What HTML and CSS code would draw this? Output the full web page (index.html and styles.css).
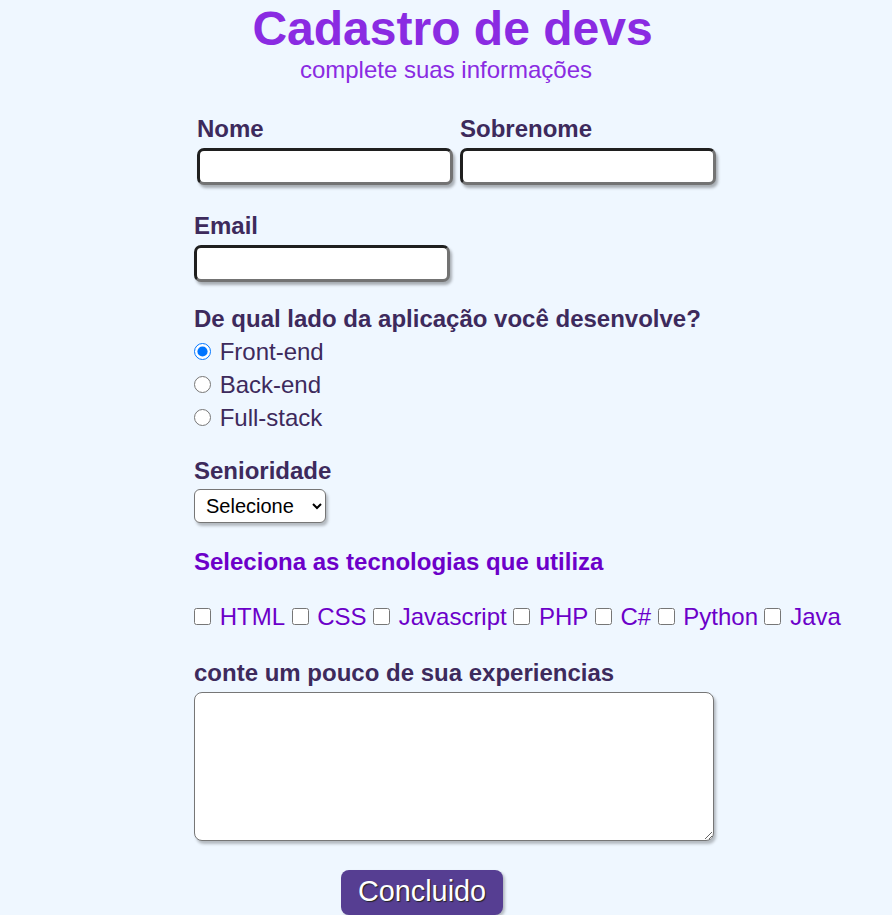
FILE: index.html
```html
<!DOCTYPE html>
<html lang="pt-BR">
  <head>
    <meta charset="UTF-8" />
    <meta name="viewport" content="width=device-width, initial-scale=1.0" />
    <title>Cadastro de devs</title>
    <link rel="stylesheet" href="styles.css">
  </head>
  <body>
    <header class="topo">
      <h1>Cadastro de devs</h1>
      <p class="subtitulo">complete suas informações</p>
    </header>

    <form class="formulario">
      <div class="linha-nome">
        <div class="campo">
          <label for="nome" class="rotulo">Nome</label>
          <input type="text" id="nome" class="entrada">
        </div>
        <div class="campo">
          <label for="sobrenome" class="rotulo">Sobrenome</label>
          <input type="text" id="sobrenome" class="entrada">
        </div>
      </div>

      <div class="campo email">
        <label for="email" class="rotulo">Email</label>
        <input type="email" id="email" class="entrada">
      </div>

      <div class="lado">
        <p class="rotulo">De qual lado da aplicação você desenvolve?</p>
        <div class="opcoes">
          <label class="opcao"><input type="radio" name="lado" checked> Front-end</label>
          <label class="opcao"><input type="radio" name="lado"> Back-end</label>
          <label class="opcao"><input type="radio" name="lado"> Full-stack</label>
        </div>
      </div>

      <div class="senioridade">
        <label for="senioridade" class="rotulo">Senioridade</label>
        <select id="senioridade" class="selecao">
          <option>Selecione</option>
          <option>Júnior</option>
          <option>Pleno</option>
          <option>Sênior</option>
        </select>
      </div>

      <div class="techs">
        <p class="rotulo roxo">Seleciona as tecnologias que utiliza</p>
        <div class="tecnologias"><label><input type="checkbox"> HTML</label><label><input type="checkbox"> CSS</label><label><input type="checkbox"> Javascript</label><label><input type="checkbox"> PHP</label><label><input type="checkbox"> C#</label><label><input type="checkbox"> Python</label><label><input type="checkbox"> Java</label></div>
      </div>

      <div class="experiencia">
        <label for="experiencia" class="rotulo">conte um pouco de sua experiencias</label>
        <textarea id="experiencia" class="texto"></textarea>
      </div>

      <button type="submit" class="btn">Concluido</button>
    </form>
  </body>
</html>
```

FILE: styles.css
```css
body {
  font-family: "Liberation Sans", Arial, sans-serif;
  background-color: #eff7ff;
  color: #3d2a5c;
  margin: 0;
  padding: 0;
  font-size: 24px;
}

.topo {
  text-align: center;
}

h1 {
  color: #8a2be2;
  font-size: 48px;
  margin: 1px 0 0;
  padding-left: 13px;
}

.subtitulo {
  color: #8a2be2;
  margin: 0;
}

.formulario {
  width: 504px;
  margin: 31px auto 0;
}

.linha-nome {
  display: flex;
  gap: 7px;
  margin-left: 3px;
}

.campo {
  display: flex;
  flex-direction: column;
}

.rotulo {
  display: block;
  font-weight: bold;
  margin: 0;
  white-space: nowrap;
}

.roxo {
  color: #6c00c9;
}

.email {
  margin-top: 27px;
}

.lado {
  margin-top: 23px;
}

.opcoes {
  margin-top: 2px;
}

.senioridade {
  margin-top: 23px;
}

.techs {
  margin-top: 25px;
}

.experiencia {
  margin-top: 28px;
}

.entrada {
  width: 256px;
  height: 37px;
  box-sizing: border-box;
  margin-top: 5px;
  border: 3px solid #1f1f1f;
  border-right-color: #737373;
  border-bottom-color: #737373;
  border-radius: 7px;
  background: white;
  box-shadow: 2px 3px 3px rgba(0, 0, 0, 0.3);
}

.opcao {
  display: block;
  line-height: 33px;
}

.opcao input {
  width: 17px;
  height: 17px;
  margin: 0 2px 0 0;
  vertical-align: baseline;
}

.selecao {
  display: block;
  margin-top: 4px;
  width: 132px;
  height: 34px;
  font-family: "Liberation Sans", Arial, sans-serif;
  font-size: 20px;
  color: black;
  background: white;
  border: 1px solid #767676;
  border-radius: 6px;
  padding: 0 4px 0 7px;
  box-shadow: 2px 3px 3px rgba(0, 0, 0, 0.25);
}

.tecnologias {
  margin-top: 27px;
  white-space: nowrap;
  color: #6c00c9;
}

.tecnologias input {
  width: 17px;
  height: 17px;
  margin: 0 2px 2px 6.5px;
  vertical-align: baseline;
}

.tecnologias label:first-child input {
  margin-left: 0;
}

.texto {
  display: block;
  margin-top: 5px;
  width: 520px;
  height: 149px;
  box-sizing: border-box;
  border: 1px solid #767676;
  border-radius: 8px;
  background: white;
  box-shadow: 2px 3px 3px rgba(0, 0, 0, 0.25);
}

.btn {
  display: inline-block;
  margin: 29px 0 0 147px;
  background-color: #563e92;
  color: white;
  font-family: "Liberation Sans", Arial, sans-serif;
  font-size: 28.8px;
  padding: 5px 17px 7px;
  border: none;
  border-radius: 8px;
  text-shadow: 1px 1px 1px #222;
  box-shadow: 2px 2px 3px rgba(0, 0, 0, 0.25);
  cursor: pointer;
}

.btn:hover {
  background-color: #47317c;
}
```
